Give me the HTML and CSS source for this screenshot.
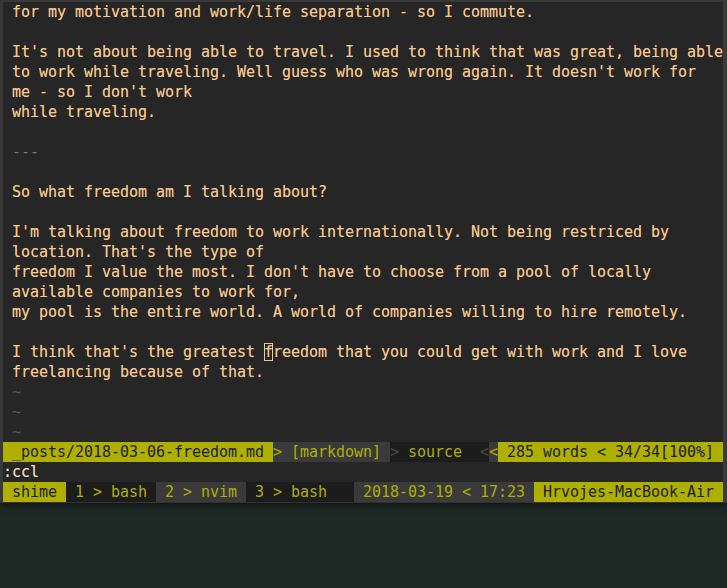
FILE: index.html
```html
<!DOCTYPE html>
<html>
<head>
<meta charset="utf-8">
<link rel="stylesheet" href="styles.css">
</head>
<body>
<div class="term">
<div class="line">for my motivation and work/life separation - so I commute.</div>
<div class="line"> </div>
<div class="line">It's not about being able to travel. I used to think that was great, being able</div>
<div class="line">to work while traveling. Well guess who was wrong again. It doesn't work for</div>
<div class="line">me - so I don't work</div>
<div class="line">while traveling.</div>
<div class="line"> </div>
<div class="line dim">---</div>
<div class="line"> </div>
<div class="line">So what freedom am I talking about?</div>
<div class="line"> </div>
<div class="line">I'm talking about freedom to work internationally. Not being restriced by</div>
<div class="line">location. That's the type of</div>
<div class="line">freedom I value the most. I don't have to choose from a pool of locally</div>
<div class="line">available companies to work for,</div>
<div class="line">my pool is the entire world. A world of companies willing to hire remotely.</div>
<div class="line"> </div>
<div class="line">I think that's the greatest <span class="cursor">f</span>reedom that you could get with work and I love</div>
<div class="line">freelancing because of that.</div>
<div class="line tilde">~</div>
<div class="line tilde">~</div>
<div class="line tilde">~</div>
<div class="bar">
<span class="seg-olive"> _posts/2018-03-06-freedom.md </span><span class="seg-gray">&gt; [markdown] </span><span class="seg-black"><span class="sep">&gt;</span> source  <span class="sep">&lt;</span></span><span class="seg-gray">&lt;</span><span class="seg-olive"> 285 words &lt; 34/34[100%]</span>
</div>
<div class="cmd">:ccl</div>
<div class="bar">
<span class="seg-olive"> shime </span><span class="seg-black"> 1 &gt; bash </span><span class="seg-gray"> 2 &gt; nvim </span><span class="seg-black"> 3 &gt; bash   </span><span class="seg-gray"> 2018-03-19 &lt; 17:23 </span><span class="seg-olive"> Hrvojes-MacBook-Air </span>
</div>
</div>
</body>
</html>
```
FILE: styles.css
```css
html, body {
  margin: 0;
  padding: 0;
}
body {
  width: 727px;
  height: 588px;
  overflow: hidden;
  background: linear-gradient(180deg, #1b2421 0%, #1f2a26 30%, #1e2925 100%);
}
.term {
  box-sizing: border-box;
  width: 727px;
  background: #262626;
  border-top: 2px solid #383838;
  border-left: 3px solid #383838;
  border-right: 4px solid #3a3a3a;
  border-bottom: 1px solid #333;
  font-family: "DejaVu Sans Mono", monospace;
  font-size: 15px;
  letter-spacing: -0.031px;
  line-height: 20px;
  color: #f8c88c;
  text-shadow: 0 0 0.4px rgba(248, 200, 140, 0.6);
  box-shadow: 0 3px 6px rgba(0,0,0,0.5);
}
.line {
  height: 20px;
  padding-left: 9px;
  white-space: pre;
}
.dim {
  color: #7a7a7a;
  text-shadow: none;
}
.tilde {
  color: #585858;
  text-shadow: none;
}
.cursor {
  outline: 1px solid #f8c88c;
  outline-offset: -1px;
}
.cmd {
  height: 20px;
  white-space: pre;
  color: #f3dcbd;
}
.bar {
  display: flex;
  height: 20px;
  white-space: pre;
  text-shadow: none;
}
.seg-olive {
  background: #afaf00;
  color: #1c1c1c;
}
.seg-gray {
  background: #3a3a3a;
  color: #afaf00;
}
.seg-black {
  background: #1c1c1c;
  color: #afaf00;
}
.bar > .seg-olive:last-child {
  flex: 1;
}
.sep {
  color: #4a4a4a;
}
```
